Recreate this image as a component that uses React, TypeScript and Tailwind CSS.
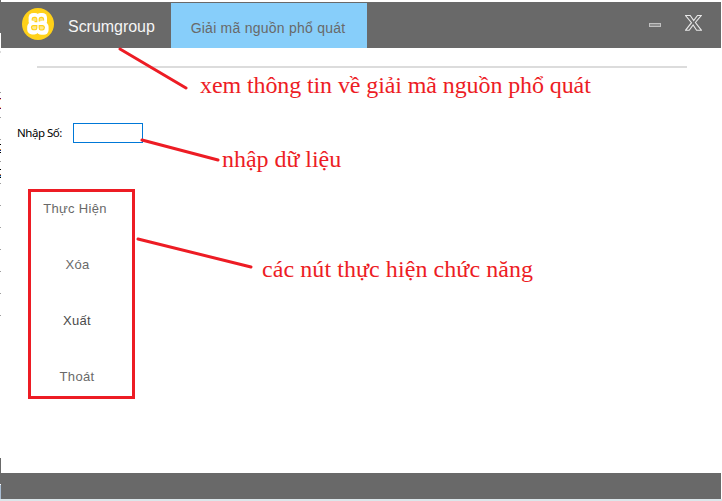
const edgeMarks = [
  { y: 51, c: "#dcdcdc", h: 2 },
  { y: 92, c: "#a0a0a0", h: 1 },
  { y: 98, c: "#600060", h: 1 },
  { y: 99, c: "#ffc080", h: 1 },
  { y: 107, c: "#ffc080", h: 1 },
  { y: 108, c: "#600060", h: 1 },
  { y: 117, c: "#a0a0a0", h: 1 },
  { y: 139, c: "#a0a0a0", h: 1 },
  { y: 144, c: "#000000", h: 1 },
  { y: 149, c: "#d08040", h: 1 },
  { y: 150, c: "#103080", h: 1 },
  { y: 152, c: "#000000", h: 1 },
  { y: 161, c: "#a0a0a0", h: 1 },
  { y: 169, c: "#000000", h: 1 },
  { y: 174, c: "#d08040", h: 1 },
  { y: 175, c: "#103080", h: 1 },
  { y: 176, c: "#70c0e0", h: 1 },
  { y: 177, c: "#000000", h: 1 },
  { y: 183, c: "#a0a0a0", h: 1 },
  { y: 205, c: "#a0a0a0", h: 1 },
  { y: 227, c: "#a0a0a0", h: 1 },
  { y: 249, c: "#a0a0a0", h: 1 },
  { y: 271, c: "#a0a0a0", h: 1 },
  { y: 293, c: "#a0a0a0", h: 1 },
  { y: 315, c: "#a0a0a0", h: 1 },
  { y: 458, c: "#696969", h: 26 },
  { y: 485, c: "#a9bdd3", h: 14 },
];

const sans = "font-['Liberation_Sans',Arial,sans-serif]";

function Logo() {
  return (
    <svg className="mt-[6px] ml-[21px] h-8 w-8 shrink-0" viewBox="0 0 32 32">
      <circle cx="16" cy="16" r="16" fill="#ffd119" />
      <g fill="#fff">
        <rect x="6.6" y="5" width="11" height="13" rx="4.6" />
        <rect x="14" y="5" width="11" height="13" rx="4.6" />
        <rect x="5.2" y="14" width="12" height="12.5" rx="4.8" />
        <rect x="14.6" y="14" width="12" height="12.8" rx="4.8" />
      </g>
      <g fill="none" stroke="#ffd119" strokeWidth="1.1">
        <path d="M10.2 12.4V10.8Q10.4 9.4 12 9.4H13.4Q14.8 9.6 14.8 11V13.6H12.6" fill="#ffe37a" />
        <path d="M17.2 13.6V10.8Q17.4 9.4 19 9.4H20Q21.6 9.6 21.6 11.2V12.6" fill="#ffe37a" />
        <path d="M14.8 17.6H11Q9.4 17.8 9.4 19.4 9.6 21.6 11.6 21.8H13.2Q14.8 21.6 14.8 20Z" fill="#ffe98f" />
        <path d="M17.2 17.6H20.6Q22.4 17.8 22.4 19.6 22.2 21.8 20.4 22H18.6Q17.2 21.8 17.2 20Z" fill="#ffe98f" />
      </g>
    </svg>
  );
}

function Header() {
  return (
    <header className="ml-px mr-px flex h-[46px] items-start bg-[#696969]">
      <Logo />
      <span className="ml-[14px] mt-[13px] w-[103px] shrink-0 whitespace-nowrap text-[16px] leading-6 tracking-[-0.04px] text-[#f5f5f5]">
        Scrumgroup
      </span>
      <button className="mt-px h-[45px] w-[196px] shrink-0 whitespace-nowrap bg-[#87cefa] pr-[2px] pt-[5px] text-[14px] tracking-[0.24px] text-[#696969]">
        Giải mã nguồn phổ quát
      </button>
      <button aria-label="minimize" className="ml-[282px] mt-[21px] h-1 w-3 border border-[#c0c0c0] bg-[#8e8e8e]" />
      <button aria-label="close" className="ml-6 mt-[13px] h-4 w-[17px]">
        <svg viewBox="0 0 17 16" className="h-4 w-[17px]" fill="none" stroke="#e8e8e8" strokeWidth="1.1">
          <path d="M.5.5H5.2L8.7 5.6 12.5.5H16.2L10.4 7.5 16.5 15.3H11.6L8.1 10 4.2 15.3H.5L6.5 7.7Z" />
        </svg>
      </button>
    </header>
  );
}

export default function App() {
  return (
    <div className={`relative flex h-[501px] w-[722px] flex-col overflow-hidden bg-white pt-[2px] ${sans}`}>
      <Header />
      <main className="flex-1">
        <div className="ml-[37px] mt-[18px] h-[2px] w-[650px] bg-[#dcdcdc]" />
        <div className="mt-[55px] flex h-5 items-center">
          <label htmlFor="num" className="ml-[17px] w-14 whitespace-nowrap font-['Noto_Sans',sans-serif] text-[11.5px] leading-5 tracking-[-0.47px] text-black">
            Nhập Số:
          </label>
          <input id="num" className="h-5 w-[70px] border border-[#0078d7] bg-white outline-none" />
        </div>
        <div className="ml-7 mt-[46px] flex h-[210px] w-[107px] flex-col items-center border-[3px] border-[#ed1c24] pr-[13px] pt-[5px] text-[13px] leading-6 tracking-[0.33px] text-[#696969]">
          <button className="mb-8 h-6 whitespace-nowrap">Thực Hiện</button>
          <button className="mb-8 ml-[5px] h-6">Xóa</button>
          <button className="mb-8 ml-[4px] h-6 text-[#4a4a4a]">Xuất</button>
          <button className="ml-[4px] h-6">Thoát</button>
        </div>
      </main>
      <footer className="mx-px mb-[2px] h-[26px] bg-[#696969]" />
      <div className="absolute bottom-0 left-0 h-[2px] w-full bg-[#dce6ea]" />
      <div className="absolute left-0 top-0 h-[33px] w-px bg-[#696969]" />
      {edgeMarks.map((m) => (
        <i key={m.y} className="absolute left-0 w-px" style={{ top: m.y, height: m.h, backgroundColor: m.c }} />
      ))}
      <svg className="pointer-events-none absolute inset-0 h-full w-full" stroke="#ed1c24" strokeWidth="3" strokeLinecap="round">
        <path d="M120 49 186 88M142 140 218 160M138 239 251 267" />
      </svg>
      <div className="pointer-events-none absolute inset-0 whitespace-nowrap font-['Liberation_Serif','Times_New_Roman',serif] text-[24px] leading-7 text-[#ed1c24]">
        <span className="absolute left-[200px] top-[71px] tracking-[-0.1px]">xem thông tin về giải mã nguồn phổ quát</span>
        <span className="absolute left-[222px] top-[145px] tracking-[-0.04px]">nhập dữ liệu</span>
        <span className="absolute left-[262px] top-[255px] tracking-[0.07px]">các nút thực hiện chức năng</span>
      </div>
    </div>
  );
}
